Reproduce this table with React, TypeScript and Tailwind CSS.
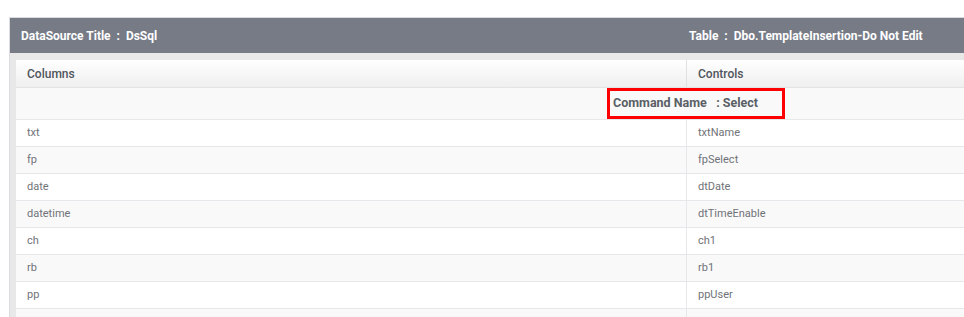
import React from "react";

const rows: [string, string][] = [
  ["txt", "txtName"],
  ["fp", "fpSelect"],
  ["date", "dtDate"],
  ["datetime", "dtTimeEnable"],
  ["ch", "ch1"],
  ["rb", "rb1"],
  ["pp", "ppUser"],
  ["", ""],
];

export default function App() {
  return (
    <div
      className="w-[964px] h-[317px] overflow-hidden bg-white"
      style={{ fontFamily: "Roboto, 'Liberation Sans', sans-serif" }}
    >
      <div className="pt-[17px] pl-[9px]">
        <div className="w-[1354px] border border-[#d9dbe0] bg-[#e8e8e8]">
          <div className="grid grid-cols-[679px_1fr] h-[35px] items-center bg-[#767b86] text-white text-[12px] font-bold">
            <div className="pl-[11px]">DataSource Title&nbsp;&nbsp;:&nbsp;&nbsp;DsSql</div>
            <div>Table&nbsp;&nbsp;:&nbsp;&nbsp;Dbo.TemplateInsertion-Do Not Edit</div>
          </div>
          <div className="pl-[6px] pt-[7px]">
            <div className="w-[1340px] bg-white">
              <div className="grid grid-cols-[670px_670px] h-[28px] bg-gradient-to-b from-white to-[#efefef] border-b border-[#e4e4e4] text-[12px] font-medium text-[#50555c]">
                <div className="pl-[11px] flex items-center">Columns</div>
                <div className="pl-[11px] flex items-center border-l border-[#e0e0e0]">Controls</div>
              </div>
              <div className="h-[32px] bg-[#f9f9f9] border-b border-[#e8e8e8] flex items-center pl-[591px]">
                <div className="border-[3px] border-[#ff0000] h-[31px] w-[178px] flex items-center pl-[3px] text-[12.5px] font-bold text-[#5a5f66]">
                  Command Name&nbsp;&nbsp;&nbsp;:&nbsp;Select
                </div>
              </div>
              {rows.map(([c, k], i) => (
                <div
                  key={i}
                  className={`grid grid-cols-[670px_670px] h-[27px] border-b border-[#e6e7ea] text-[11px] text-[#707277] ${
                    i % 2 === 0 ? "bg-white" : "bg-[#f9f9fa]"
                  }`}
                >
                  <div className="pl-[11px] flex items-center">{c}</div>
                  <div className="pl-[11px] flex items-center border-l border-[#e6e7ea]">{k}</div>
                </div>
              ))}
            </div>
          </div>
        </div>
      </div>
    </div>
  );
}
